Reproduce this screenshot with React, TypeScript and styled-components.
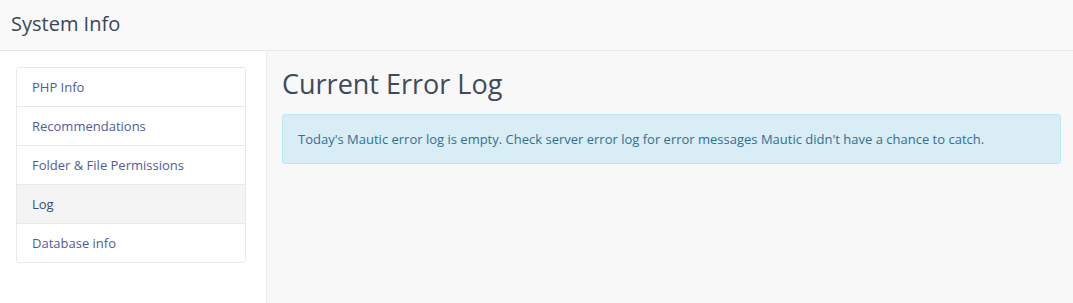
import styled, { createGlobalStyle } from "styled-components";

const GlobalStyle = createGlobalStyle`
  html, body {
    margin: 0;
    padding: 0;
    height: 100%;
  }
  body {
    font-family: "Open Sans", "Liberation Sans", sans-serif;
    background: #f8f8f8;
  }
  #root {
    min-height: 100%;
    display: flex;
    flex-direction: column;
  }
`;

const Page = styled.div`
  flex: 1;
  display: flex;
  flex-direction: column;
`;

const Header = styled.header`
  height: 51px;
  box-sizing: border-box;
  padding: 0 11px;
  display: flex;
  align-items: center;
  background: #f9f9f9;
  border-bottom: 1px solid #e5e7ea;
`;

const Title = styled.h1`
  margin: 0;
  font-size: 20px;
  font-weight: 400;
  color: #3a4756;
  line-height: 1;
  padding-bottom: 2px;
`;

const Body = styled.div`
  flex: 1;
  display: flex;
`;

const Sidebar = styled.aside`
  width: 267px;
  flex-shrink: 0;
  box-sizing: border-box;
  background: #ffffff;
  border-right: 1px solid #ebedf0;
  padding: 16px 20px 16px 16px;
`;

const NavList = styled.ul`
  list-style: none;
  margin: 0;
  padding: 0;
  border: 1px solid #e7e9ec;
  border-radius: 3px;
  overflow: hidden;
`;

const NavItem = styled.li<{ active?: boolean }>`
  height: 39px;
  box-sizing: border-box;
  display: flex;
  align-items: center;
  padding: 0 15px;
  font-size: 13px;
  color: ${({ active }) => (active ? "#3d4a7e" : "#4e5d9d")};
  background: ${({ active }) => (active ? "#f4f4f4" : "#ffffff")};
  border-top: 1px solid #e7e9ec;

  &:first-child {
    border-top: none;
    height: 38px;
  }
`;

const Main = styled.main`
  flex: 1;
  padding: 14px 12px 20px 15px;
`;

const Heading = styled.h2`
  margin: 0 0 12px;
  font-size: 27px;
  font-weight: 400;
  color: #3f4b5a;
  line-height: 37px;
`;

const Alert = styled.div`
  box-sizing: border-box;
  height: 50px;
  display: flex;
  align-items: center;
  padding: 0 15px;
  font-size: 13px;
  color: #31708f;
  background: #d9edf7;
  border: 1px solid #bce8f1;
  border-radius: 3px;
`;

const items = [
  "PHP Info",
  "Recommendations",
  "Folder & File Permissions",
  "Log",
  "Database info",
];

export default function App() {
  return (
    <Page>
      <GlobalStyle />
      <Header>
        <Title>System Info</Title>
      </Header>
      <Body>
        <Sidebar>
          <NavList>
            {items.map((item) => (
              <NavItem key={item} active={item === "Log"}>
                {item}
              </NavItem>
            ))}
          </NavList>
        </Sidebar>
        <Main>
          <Heading>Current Error Log</Heading>
          <Alert>
            Today's Mautic error log is empty. Check server error log for error
            messages Mautic didn't have a chance to catch.
          </Alert>
        </Main>
      </Body>
    </Page>
  );
}
